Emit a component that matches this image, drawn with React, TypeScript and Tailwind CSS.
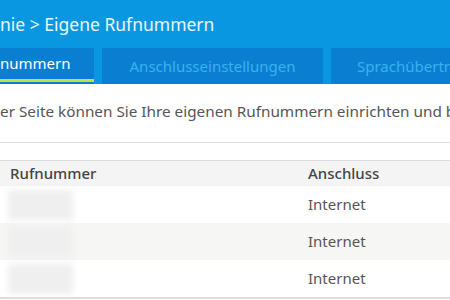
import React from "react";

const font = { fontFamily: "'Noto Sans', 'Open Sans', sans-serif" };

function Blur() {
  return (
    <div className="ml-[8px] h-[30px] w-[65px] bg-[#efefef] blur-[3px]" />
  );
}

export default function App() {
  const rows = [0, 1, 2];
  return (
    <div className="w-[450px] h-[300px] overflow-hidden bg-white" style={font}>
      <div className="bg-[#0897e0] h-[84px] flex flex-col">
        <div className="h-[48px] flex items-center pt-[1px] text-[17.5px] text-[#e9f7ff] whitespace-nowrap">
          nie &gt; Eigene Rufnummern
        </div>
        <div className="flex h-[36px] gap-[8px] whitespace-nowrap text-[15px]">
          <div className="w-[94px] shrink-0 bg-[#0a7fd1] flex flex-col">
            <div className="flex-1 flex items-center text-white">nummern</div>
            <div className="h-[3px] mb-[2px] bg-[#c9e03c]" />
          </div>
          <div className="w-[221px] shrink-0 bg-[#0a7fd1] flex items-center justify-center text-[#3cb1ee]">
            Anschlusseinstellungen
          </div>
          <div className="flex-1 bg-[#0a7fd1] flex items-center pl-[26px] text-[#3cb1ee]">
            Sprachübertragung
          </div>
        </div>
      </div>
      <div className="h-[59px] border-b border-[#dedede] flex items-start pt-[16px] text-[15.3px] text-[#555] whitespace-nowrap">
        er Seite können Sie Ihre eigenen Rufnummern einrichten und bearbeiten.
      </div>
      <div className="mt-[17px] border-t border-[#dcdcdc] border-b-2 border-b-[#dcdcdc]">
        <div className="h-[25px] bg-[#f4f4f4] flex items-center text-[15px] text-[#444] font-medium">
          <div className="w-[308px] pl-[10px]">Rufnummer</div>
          <div>Anschluss</div>
        </div>
        {rows.map((i) => (
          <div
            key={i}
            className={`h-[37px] flex items-center text-[15px] text-[#555] ${i === 1 ? "bg-[#f6f6f5]" : "bg-white"}`}
          >
            <div className="w-[308px]">
              <Blur />
            </div>
            <div>Internet</div>
          </div>
        ))}
      </div>
    </div>
  );
}
